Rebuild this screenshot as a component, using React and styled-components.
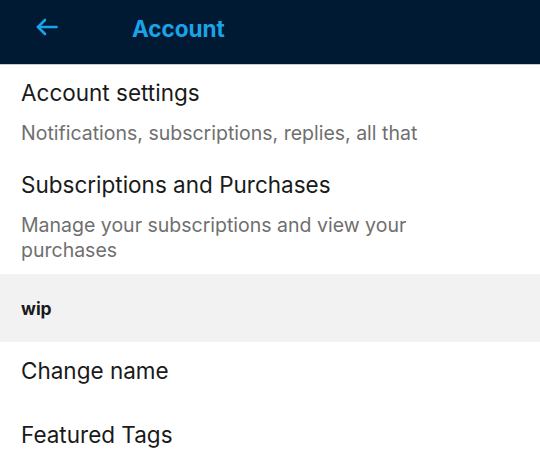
import styled, { createGlobalStyle } from 'styled-components';

const GlobalStyle = createGlobalStyle`
  body {
    margin: 0;
    background: #ffffff;
    font-family: 'Inter', 'Liberation Sans', sans-serif;
  }
`;

const Screen = styled.div`
  width: 540px;
  height: 463px;
  overflow: hidden;
  background: #ffffff;
`;

const Header = styled.header`
  height: 64px;
  display: flex;
  align-items: center;
  background: #011a33;
  border-bottom: 1px solid #c7ccd1;
`;

const BackButton = styled.button`
  width: 94px;
  height: 64px;
  padding: 0 0 10px 36px;
  display: flex;
  align-items: center;
  border: none;
  background: transparent;
  color: #1aa3e8;
`;

const Title = styled.h1`
  margin: 0 0 8px 38px;
  font-size: 22.5px;
  font-weight: 700;
  color: #1aa3e8;
`;

const Item = styled.div`
  padding: 13px 100px 11px 21px;
`;

const ItemTitle = styled.div`
  font-size: 22.5px;
  line-height: 30px;
  color: #1a1a1a;
`;

const ItemSubtitle = styled.div`
  margin-top: 13px;
  font-size: 19.5px;
  line-height: 25px;
  color: #6f6f6f;
`;

const Section = styled.div`
  height: 68px;
  padding: 0 21px;
  display: flex;
  align-items: center;
  background: #f2f2f2;
  font-size: 17.5px;
  font-weight: 700;
  color: #1a1a1a;
`;

const PlainItem = styled.div`
  box-sizing: border-box;
  height: 64px;
  padding: 0 21px 7px;
  display: flex;
  align-items: center;
  font-size: 22.5px;
  color: #1a1a1a;
`;

const BackArrow = () => (
  <svg width="22" height="18" viewBox="0 0 22 18" fill="none" stroke="currentColor" strokeWidth="2.6" strokeLinecap="round" strokeLinejoin="round">
    <path d="M20.5 9H2" />
    <path d="M9 2L2 9l7 7" />
  </svg>
);

export default function App() {
  return (
    <Screen>
      <GlobalStyle />
      <Header>
        <BackButton aria-label="Back">
          <BackArrow />
        </BackButton>
        <Title>Account</Title>
      </Header>
      <Item>
        <ItemTitle>Account settings</ItemTitle>
        <ItemSubtitle>Notifications, subscriptions, replies, all that</ItemSubtitle>
      </Item>
      <Item>
        <ItemTitle>Subscriptions and Purchases</ItemTitle>
        <ItemSubtitle>Manage your subscriptions and view your purchases</ItemSubtitle>
      </Item>
      <Section>wip</Section>
      <PlainItem>Change name</PlainItem>
      <PlainItem>Featured Tags</PlainItem>
    </Screen>
  );
}
